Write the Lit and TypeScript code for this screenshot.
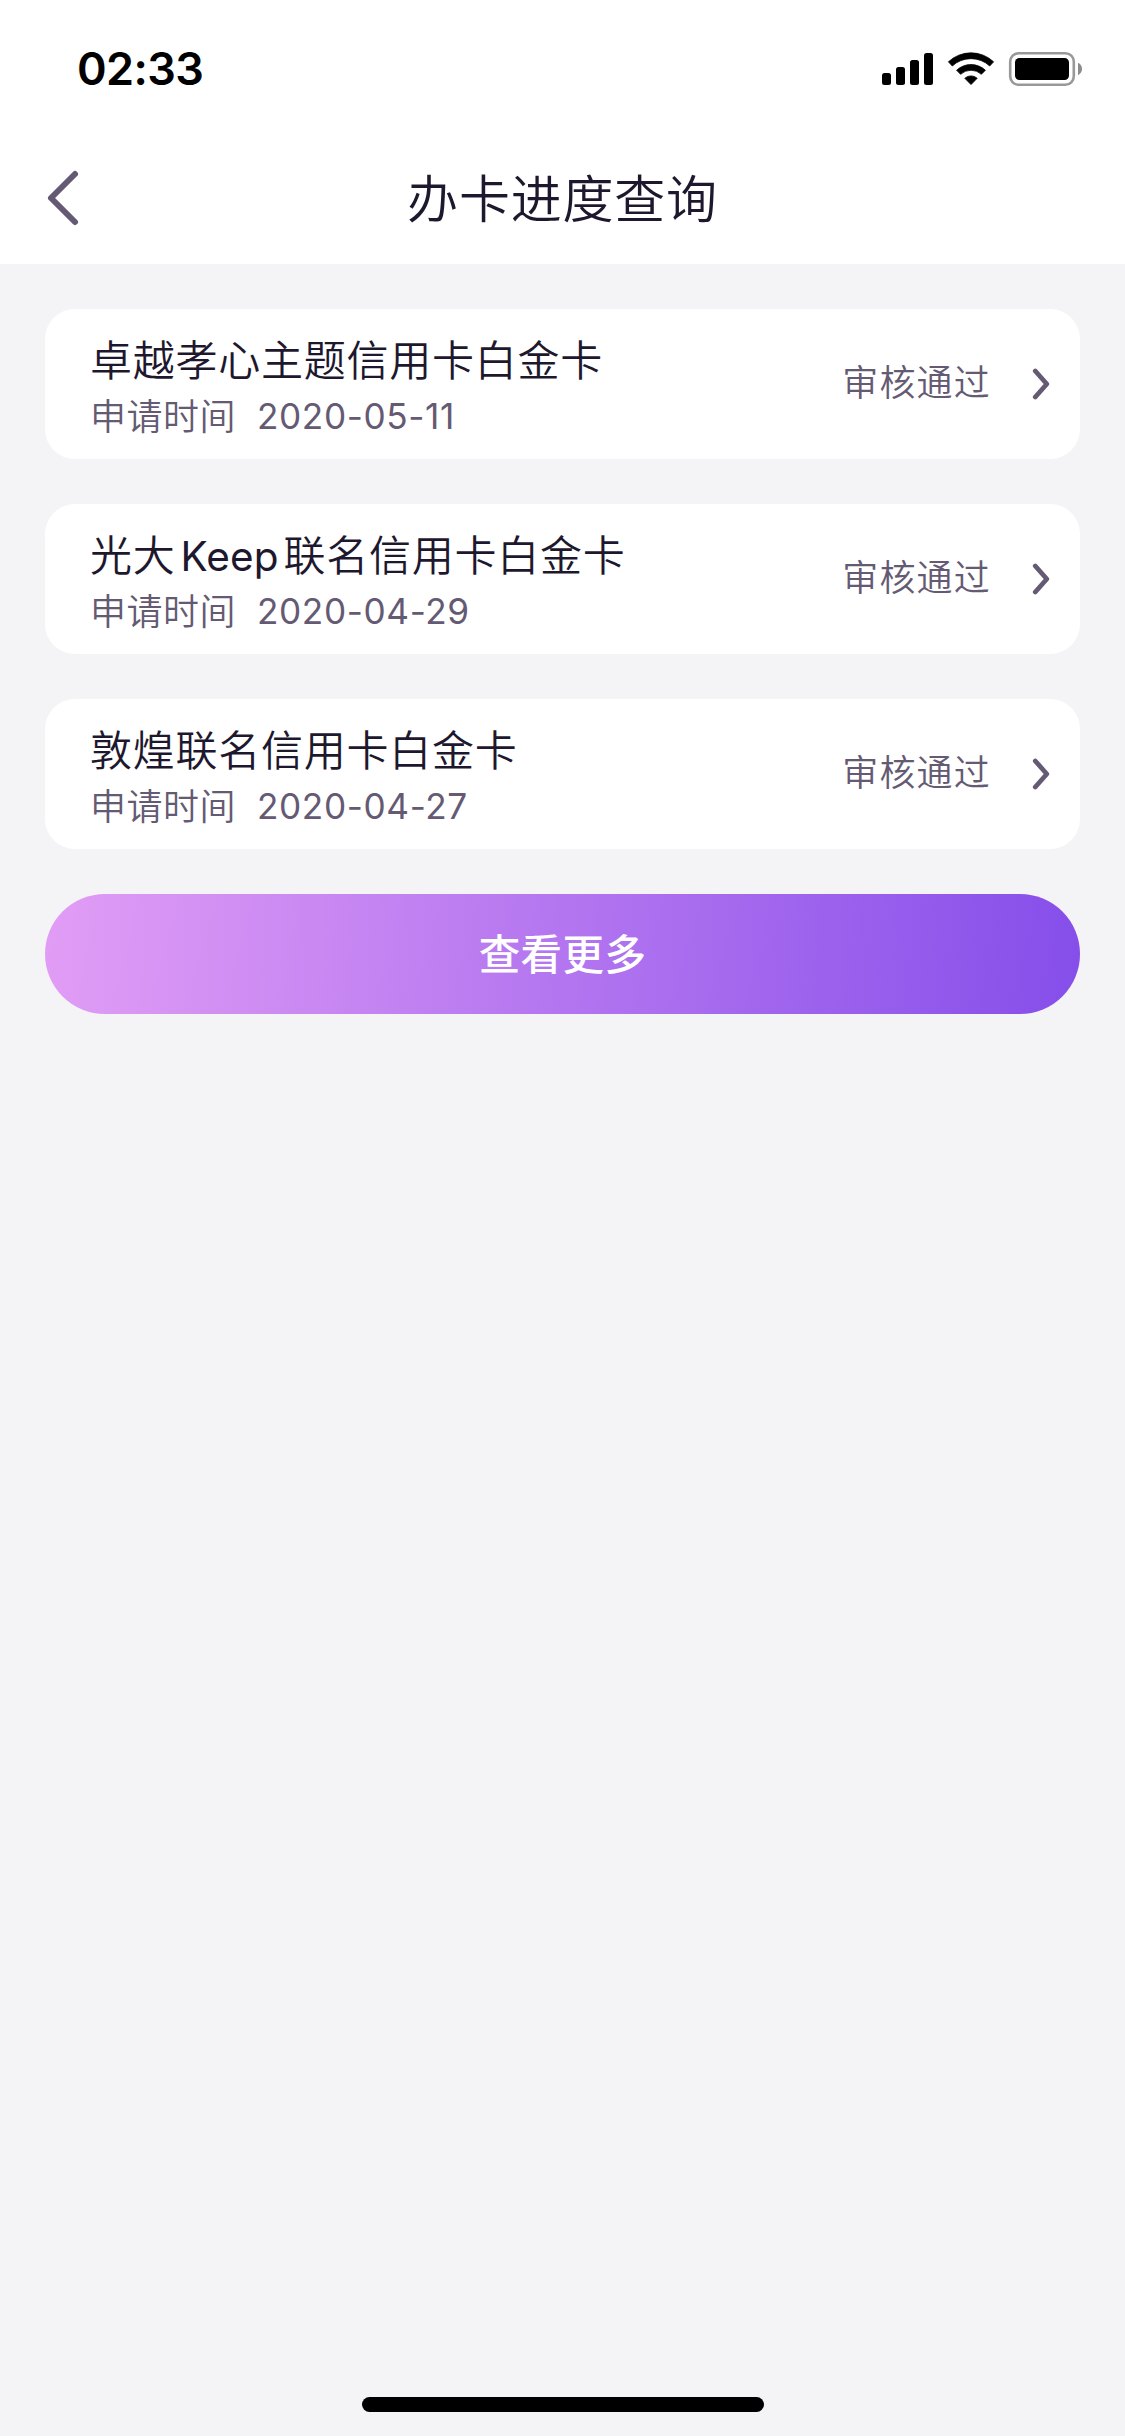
import { LitElement, html, css } from "lit";
import { customElement, property } from "lit/decorators.js";

interface Application {
  name: (string | { latin: string })[];
  date: string;
  status: string;
}

const APPLICATIONS: Application[] = [
  { name: ["卓越孝心主题信用卡白金卡"], date: "2020-05-11", status: "审核通过" },
  { name: ["光大", { latin: "Keep" }, "联名信用卡白金卡"], date: "2020-04-29", status: "审核通过" },
  { name: ["敦煌联名信用卡白金卡"], date: "2020-04-27", status: "审核通过" },
];

@customElement("status-bar")
class StatusBar extends LitElement {
  static styles = css`
    :host {
      display: flex;
      justify-content: space-between;
      height: 132px;
      box-sizing: border-box;
      padding: 42px 43px 0 77px;
    }
    .time {
      font: 600 45px/54px Inter, sans-serif;
      letter-spacing: -0.6px;
      color: #000;
    }
    .icons {
      display: block;
      margin-top: 8px;
    }
  `;

  render() {
    return html`
      <span class="time">02:33</span>
      <svg class="icons" width="200" height="38" viewBox="882 50 200 38">
        <rect x="882" y="73" width="9" height="12" rx="2.5" />
        <rect x="896" y="67" width="9" height="18" rx="2.5" />
        <rect x="910" y="60" width="9" height="25" rx="2.5" />
        <rect x="924" y="53" width="9" height="32" rx="2.5" />
        <path d="M948.4 61.8A33 33 0 0 1 993.6 61.8L989.7 66A27.4 27.4 0 0 0 952.3 66Z" stroke="#000" stroke-width="0.8" stroke-linejoin="round" />
        <path d="M956.6 70.2A21.2 21.2 0 0 1 985.4 70.2L981.4 74.3A15.3 15.3 0 0 0 960.6 74.3Z" stroke="#000" stroke-width="0.8" stroke-linejoin="round" />
        <path d="M964.8 78.3A9.2 9.2 0 0 1 977.2 78.3L971 84.6Z" stroke="#000" stroke-width="0.8" stroke-linejoin="round" />
        <rect x="1010.2" y="53.2" width="63.6" height="31.6" rx="8.5" fill="none" stroke="#999" stroke-width="2.6" />
        <rect x="1015" y="58" width="54" height="22" rx="4.5" />
        <path d="M1078 62.8C1083.4 65.6 1083.4 72.4 1078 75.2Z" fill="#8c8c8c" />
      </svg>
    `;
  }
}

@customElement("nav-bar")
class NavBar extends LitElement {
  @property() heading = "";

  static styles = css`
    :host {
      display: grid;
      grid-template-columns: 120px 1fr 120px;
      align-items: center;
      height: 132px;
    }
    .back {
      display: block;
      margin-left: 45px;
    }
    .heading {
      margin: 0;
      padding-bottom: 4px;
      font: 350 51px/72px "Noto Sans CJK SC", sans-serif;
      letter-spacing: 0.8px;
      text-align: center;
      color: #1e182e;
    }
  `;

  render() {
    return html`
      <svg class="back" width="36" height="60" viewBox="45 168 36 60">
        <path d="M75 174L51 198L75 222" fill="none" stroke="#655a73" stroke-width="6" stroke-linecap="round" stroke-linejoin="round" />
      </svg>
      <h1 class="heading">${this.heading}</h1>
    `;
  }
}

@customElement("application-card")
class ApplicationCard extends LitElement {
  @property({ attribute: false }) item!: Application;

  static styles = css`
    :host {
      display: flex;
      align-items: center;
      height: 150px;
      box-sizing: border-box;
      padding: 0 30px 0 45px;
      border-radius: 30px;
      background: #fff;
      color: #655a73;
      font-family: "Noto Sans CJK SC", sans-serif;
      font-weight: 350;
    }
    .info {
      flex: 1;
      display: flex;
      flex-direction: column;
    }
    .name {
      height: 60px;
      font-size: 42px;
      line-height: 60px;
      letter-spacing: 0.75px;
      color: #1e182e;
      white-space: nowrap;
    }
    .latin {
      font-family: Inter, sans-serif;
      font-weight: 400;
      font-size: 40.5px;
      line-height: 0;
      letter-spacing: 0.1px;
      margin: 0 5px 0 5px;
    }
    .meta {
      display: flex;
      align-items: flex-start;
      gap: 21px;
      height: 52px;
      font-size: 36px;
      line-height: 52px;
      letter-spacing: 0.5px;
    }
    .date {
      font-family: Inter, sans-serif;
      font-weight: 400;
      font-size: 35.2px;
      letter-spacing: 0.6px;
      padding-top: 2px;
    }
    .status {
      font-size: 36px;
      line-height: 52px;
      letter-spacing: 1.2px;
      margin: 0 39px 9px 0;
    }
    .arrow {
      display: block;
    }
  `;

  render() {
    const { name, date, status } = this.item;
    return html`
      <div class="info">
        <div class="name">${name.map((p) => (typeof p === "string" ? p : html`<span class="latin">${p.latin}</span>`))}</div>
        <div class="meta"><span>申请时间</span><span class="date">${date}</span></div>
      </div>
      <span class="status">${status}</span>
      <svg class="arrow" width="20" height="34" viewBox="0 0 20 34">
        <path d="M5.3 4L16.8 17L5.3 30" fill="none" stroke="#655a73" stroke-width="4.8" stroke-linecap="round" stroke-linejoin="round" />
      </svg>
    `;
  }
}

@customElement("app-root")
class AppRoot extends LitElement {
  static styles = css`
    :host {
      display: flex;
      flex-direction: column;
      width: 1125px;
      height: 2436px;
      background: #f4f4f7;
    }
    .header {
      background: #fff;
    }
    .content {
      flex: 1;
      display: flex;
      flex-direction: column;
      gap: 45px;
      padding: 45px 45px 0;
    }
    .more {
      height: 120px;
      border: 0;
      border-radius: 60px;
      padding: 0 0 4px;
      background: linear-gradient(93deg, #e19df5 0%, #864eea 100%);
      color: #fff;
      font: 500 41.5px/60px "Noto Sans CJK SC", sans-serif;
      letter-spacing: 0.4px;
    }
    .home {
      align-self: center;
      width: 402px;
      height: 15px;
      margin-bottom: 24px;
      border-radius: 7.5px;
      background: #000;
    }
  `;

  render() {
    return html`
      <header class="header">
        <status-bar></status-bar>
        <nav-bar heading="办卡进度查询"></nav-bar>
      </header>
      <main class="content">
        ${APPLICATIONS.map((a) => html`<application-card .item=${a}></application-card>`)}
        <button class="more">查看更多</button>
      </main>
      <div class="home"></div>
    `;
  }
}
